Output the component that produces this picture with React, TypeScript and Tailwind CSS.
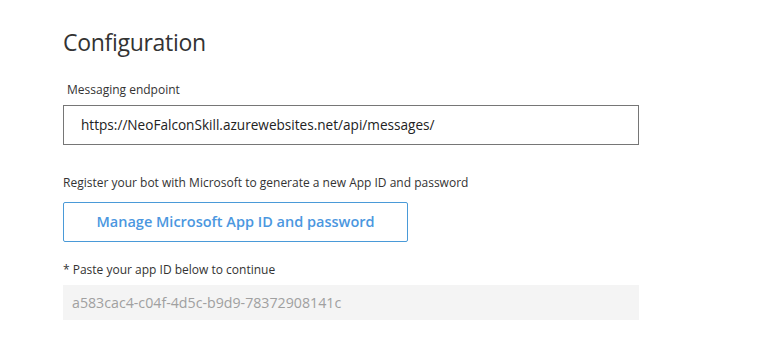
export default function App() {
  return (
    <div className="min-h-screen w-full bg-white font-['Open_Sans',sans-serif] text-[#333]">
      <div className="w-[576px] pl-[63px] pt-[26px] box-content">
        <h1 className="text-[23px] leading-[32px] font-normal text-[#333] tracking-[-0.3px]">
          Configuration
        </h1>

        <label className="block mt-[24px] pl-[4px] text-[12px] leading-[16px] text-[#333]">
          Messaging endpoint
        </label>
        <div className="mt-[7px] h-[40px] border border-[#767676] flex items-center pl-[17px] text-[13.6px] text-[#222]">
          https://NeoFalconSkill.azurewebsites.net/api/messages/
        </div>

        <p className="mt-[30px] text-[12px] leading-[16px] text-[#333]">
          Register your bot with Microsoft to generate a new App ID and password
        </p>
        <button className="mt-[11px] w-[345px] h-[40px] border border-[#4a9ad8] rounded-[2px] text-[14.5px] font-semibold text-[#4b97e0] bg-white">
          Manage Microsoft App ID and password
        </button>

        <p className="mt-[20px] text-[12px] leading-[16px] text-[#333]">
          * Paste your app ID below to continue
        </p>
        <div className="mt-[7px] h-[35px] bg-[#f4f4f4] flex items-center pl-[9px] text-[14.2px] text-[#a0a0a0]">
          a583cac4-c04f-4d5c-b9d9-78372908141c
        </div>
      </div>
    </div>
  )
}
